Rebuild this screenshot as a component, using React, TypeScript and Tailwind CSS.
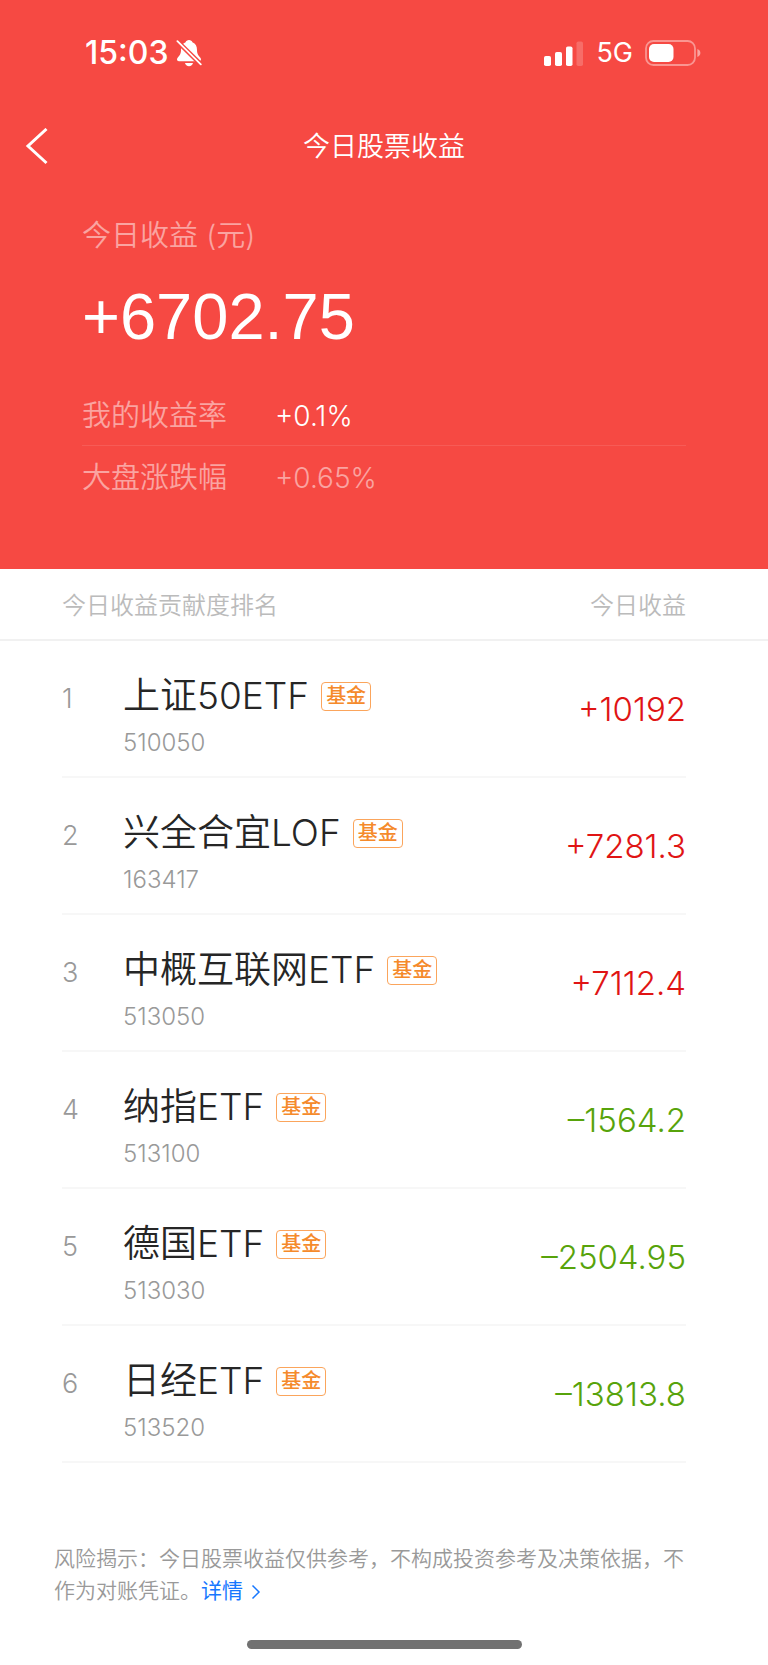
type Holding = {
  name: string;
  code: string;
  amount: string;
};

const holdings: Holding[] = [
  { name: "上证50ETF", code: "510050", amount: "+10192" },
  { name: "兴全合宜LOF", code: "163417", amount: "+7281.3" },
  { name: "中概互联网ETF", code: "513050", amount: "+7112.4" },
  { name: "纳指ETF", code: "513100", amount: "–1564.2" },
  { name: "德国ETF", code: "513030", amount: "–2504.95" },
  { name: "日经ETF", code: "513520", amount: "–13813.8" },
];

function BellOffIcon() {
  return (
    <svg viewBox="0 0 26 28" className="h-7 w-[26px]" fill="none" aria-hidden="true">
      <path
        d="M13 1C11.3 1 10 2 9.6 3.2C6.2 4.6 5 7.4 5 11C5 15 3.6 16.4 1.8 18.6C0.4 20.4 0.8 22.2 2.8 22.2H23.2C25.2 22.2 25.6 20.4 24.2 18.6C22.4 16.4 21 15 21 11C21 7.4 19.8 4.6 16.4 3.2C16 2 14.7 1 13 1Z"
        fill="#fff"
      />
      <path d="M9 24H17C16.6 26 15 27.2 13 27.2C11 27.2 9.4 26 9 24Z" fill="#fff" />
      <path d="M0 1L26 26.5" stroke="#f64943" strokeWidth="4.6" />
      <path d="M1.4 2.2L24.8 25.4" stroke="#fff" strokeWidth="1.8" strokeLinecap="round" />
    </svg>
  );
}

function SignalIcon() {
  return (
    <svg viewBox="0 0 40 25" className="h-[25px] w-10" fill="#fff" aria-hidden="true">
      <rect x="0" y="15" width="7" height="10" rx="1.8" />
      <rect x="11" y="11" width="7" height="14" rx="1.8" />
      <rect x="22" y="5.5" width="6.5" height="19.5" rx="1.8" />
      <rect x="32.5" y="0.5" width="6.5" height="24.5" rx="1.8" opacity="0.2" />
    </svg>
  );
}

function BatteryIcon() {
  return (
    <svg viewBox="0 0 56 26" className="h-[26px] w-14" fill="none" aria-hidden="true">
      <rect x="1" y="1" width="49" height="24" rx="7.5" stroke="#fff" strokeOpacity="0.42" strokeWidth="1.8" />
      <rect x="4" y="4" width="24.5" height="18" rx="5" fill="#fff" />
      <path d="M52.4 9C54.4 9.8 55.4 11.2 55.4 13C55.4 14.8 54.4 16.2 52.4 17Z" fill="#fff" fillOpacity="0.5" />
    </svg>
  );
}

function StatusBar() {
  return (
    <div className="flex h-[106px] items-center justify-between pr-[67px] pl-[85px]">
      <div className="flex items-center gap-2">
        <span className="text-[32px] leading-9 font-medium">15:03</span>
        <BellOffIcon />
      </div>
      <div className="flex items-center gap-3">
        <SignalIcon />
        <span className="text-[27px] leading-9 font-normal">5G</span>
        <BatteryIcon />
      </div>
    </div>
  );
}

function Summary() {
  return (
    <section className="px-[82px] pt-7 pb-[59px]">
      <h2 className="text-[29px] leading-10 text-white/50">今日收益 (元)</h2>
      <p className="mt-[23px] font-['Liberation_Sans',sans-serif] text-[65px] leading-[76px] font-normal">+6702.75</p>
      <dl className="mt-[31px]">
        <div className="flex h-[60px] items-center border-b border-white/10">
          <dt className="w-[193px] text-[29px] leading-10 text-white/50">我的收益率</dt>
          <dd className="text-[28px] leading-10">+0.1%</dd>
        </div>
        <div className="flex h-16 items-center text-white/50">
          <dt className="w-[193px] text-[29px] leading-10">大盘涨跌幅</dt>
          <dd className="text-[28px] leading-10">+0.65%</dd>
        </div>
      </dl>
    </section>
  );
}

function HoldingRow({ item, rank }: { item: Holding; rank: number }) {
  const amountColor = item.amount.startsWith("+") ? "text-[#e01414]" : "text-[#57a30b]";
  return (
    <tr className="flex h-[137px] items-center border-b-2 border-[#f7f7f7]">
      <td className="w-[61px] self-start pt-[38px] text-[27px] leading-10 text-[#999]">{rank}</td>
      <td className="flex-1 self-start pt-[29px]">
        <div className="flex items-center gap-3">
          <span className="text-[37px] leading-[52px] text-[#262626]">{item.name}</span>
          <span className="rounded-sm border border-[#fba55c] px-1 text-[20px] leading-[27px] font-medium text-[#f58a2b]">
            基金
          </span>
        </div>
        <div className="mt-1 text-[24px] leading-[34px] text-[#999]">{item.code}</div>
      </td>
      <td className={`text-right text-[33px] leading-10 ${amountColor}`}>{item.amount}</td>
    </tr>
  );
}

export default function App() {
  return (
    <div className="flex min-h-screen flex-col bg-white font-['Inter','Noto_Sans_CJK_SC',sans-serif] font-[350]">
      <header className="bg-[#f64943] text-white">
        <StatusBar />
        <nav className="grid h-[82px] grid-cols-[1fr_auto_1fr] items-center">
          <button type="button" aria-label="返回" className="flex w-16 justify-start pl-[25px]">
            <svg viewBox="0 0 24 38" className="h-[38px] w-6" fill="none" aria-hidden="true">
              <path d="M21.5 1L3 18L21.5 35" stroke="#fff" strokeWidth="3" />
            </svg>
          </button>
          <h1 className="text-[27px] leading-10 font-[350]">今日股票收益</h1>
        </nav>
        <Summary />
      </header>

      <main>
        <table className="block">
          <thead className="block border-b-2 border-[#f1f1f1] pr-[82px] pl-[62px]">
            <tr className="flex h-[70px] items-center justify-between pt-1 text-[24px] leading-9 text-[#bbb]">
              <th scope="col" className="font-[350]">今日收益贡献度排名</th>
              <th scope="col" className="font-[350]">今日收益</th>
            </tr>
          </thead>
          <tbody className="block pr-[82px] pl-[62px]">
            {holdings.map((item, i) => (
              <HoldingRow key={item.code} item={item} rank={i + 1} />
            ))}
          </tbody>
        </table>
      </main>

      <footer className="flex flex-1 flex-col justify-between pt-20 pb-4">
        <p className="pr-16 pl-[54px] text-[21px] leading-8 text-[#999]">
          风险揭示：今日股票收益仅供参考，不构成投资参考及决策依据，不作为对账凭证。
          <a href="#details" className="font-normal text-[#1677ff]">
            详情
            <svg viewBox="0 0 10 16" className="ml-2 inline-block h-4 w-[10px]" fill="none" aria-hidden="true">
              <path d="M1.5 1.5L8 8L1.5 14.5" stroke="currentColor" strokeWidth="1.5" />
            </svg>
          </a>
        </p>
        <div className="mx-auto h-[9px] w-[275px] rounded-full bg-[#717171]" />
      </footer>
    </div>
  );
}
